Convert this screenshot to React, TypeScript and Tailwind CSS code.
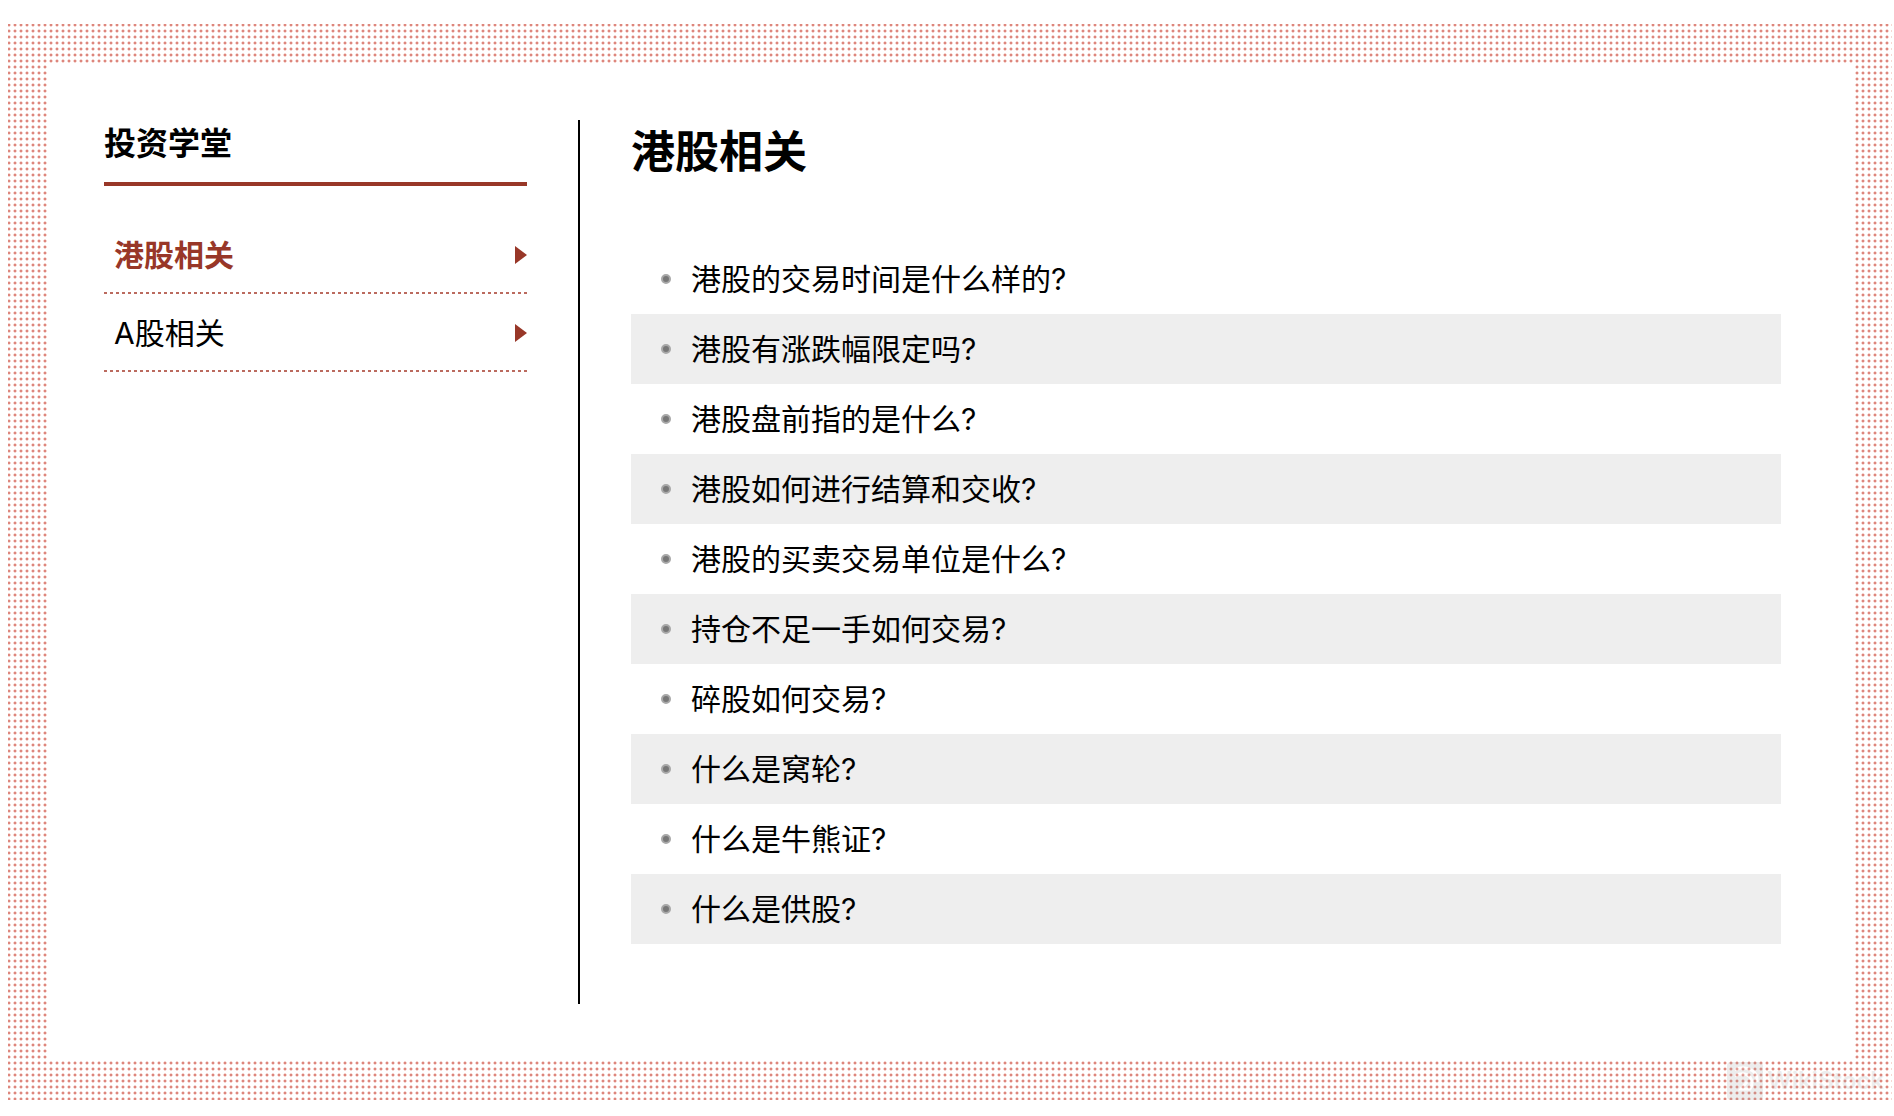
import React from "react";
import { clsx } from "clsx";

const categories = [
  { id: "hk", label: "港股相关" },
  { id: "a", label: "A股相关" },
];

const questions = [
  "港股的交易时间是什么样的?",
  "港股有涨跌幅限定吗?",
  "港股盘前指的是什么?",
  "港股如何进行结算和交收?",
  "港股的买卖交易单位是什么?",
  "持仓不足一手如何交易?",
  "碎股如何交易?",
  "什么是窝轮?",
  "什么是牛熊证?",
  "什么是供股?",
];

function Arrow() {
  return (
    <svg
      width="12"
      height="18"
      viewBox="0 0 12 18"
      className="shrink-0"
      aria-hidden="true"
    >
      <path d="M0 0 L12 9 L0 18 Z" fill="#983728" />
    </svg>
  );
}

function Sidebar({ activeId }: { activeId: string }) {
  return (
    <aside className="w-[476px] shrink-0 border-r-2 border-black pr-[51px]">
      <h2 className="border-b-4 border-[#983728] pb-[14px] text-[32px] leading-[48px] font-bold">
        投资学堂
      </h2>
      <nav className="mt-[30px]">
        <ul>
          {categories.map(({ id, label }) => (
            <li
              key={id}
              className="bg-[repeating-linear-gradient(90deg,#bb6a5e_0_3px,transparent_3px_6px)] bg-[length:100%_2px] bg-bottom bg-no-repeat"
            >
              <a
                href={`#${id}`}
                aria-current={id === activeId ? "page" : undefined}
                className={clsx(
                  "flex h-[78px] items-center justify-between pl-[10px] text-[30px]",
                  id === activeId && "font-bold text-[#983728]",
                )}
              >
                {label}
                <Arrow />
              </a>
            </li>
          ))}
        </ul>
      </nav>
    </aside>
  );
}

function Watermark() {
  return (
    <div
      className="absolute right-2 bottom-0 flex items-center gap-1 text-[#aaaaaa] opacity-20"
      aria-hidden="true"
    >
      <svg width="36" height="38" viewBox="0 0 36 38">
        <rect width="36" height="38" rx="4" fill="currentColor" />
        <path
          d="M8 8 Q17 3 26 9 Q31 13 30 20 M8 14 Q17 9 23 15 Q27 21 23 27 H14 L20 20"
          fill="none"
          stroke="white"
          strokeWidth="3"
        />
      </svg>
      <span className="text-2xl font-semibold">WikiStock</span>
    </div>
  );
}

export default function App() {
  return (
    <div className="bg-white pt-6 pr-[2px] pb-4 pl-2 font-['Inter','Noto_Sans_CJK_SC',sans-serif] text-black">
      <div className="relative bg-[radial-gradient(circle,#dd867d_1px,#f6d8d3_1px,#f6d8d3_2px,#ffffff_2px)] bg-[length:6px_6px] bg-[position:-2px_-2px] p-[39px]">
        <main className="flex bg-white py-[57px] pr-[72px] pl-[57px]">
          <Sidebar activeId="hk" />
          <section className="min-w-0 flex-1 pb-[60px] pl-[51px]">
            <h1 className="text-[44px] leading-[64px] font-bold">港股相关</h1>
            <ul className="mt-[60px]">
              {questions.map((question) => (
                <li key={question} className="even:bg-[#eeeeee]">
                  <a
                    href="#"
                    className="flex h-[70px] items-center gap-5 pl-[30px] text-[30px]"
                  >
                    <span className="size-[10px] rounded-full border-2 border-[#a8a8a8] bg-[#777777]" />
                    {question}
                  </a>
                </li>
              ))}
            </ul>
          </section>
        </main>
        <Watermark />
      </div>
    </div>
  );
}
